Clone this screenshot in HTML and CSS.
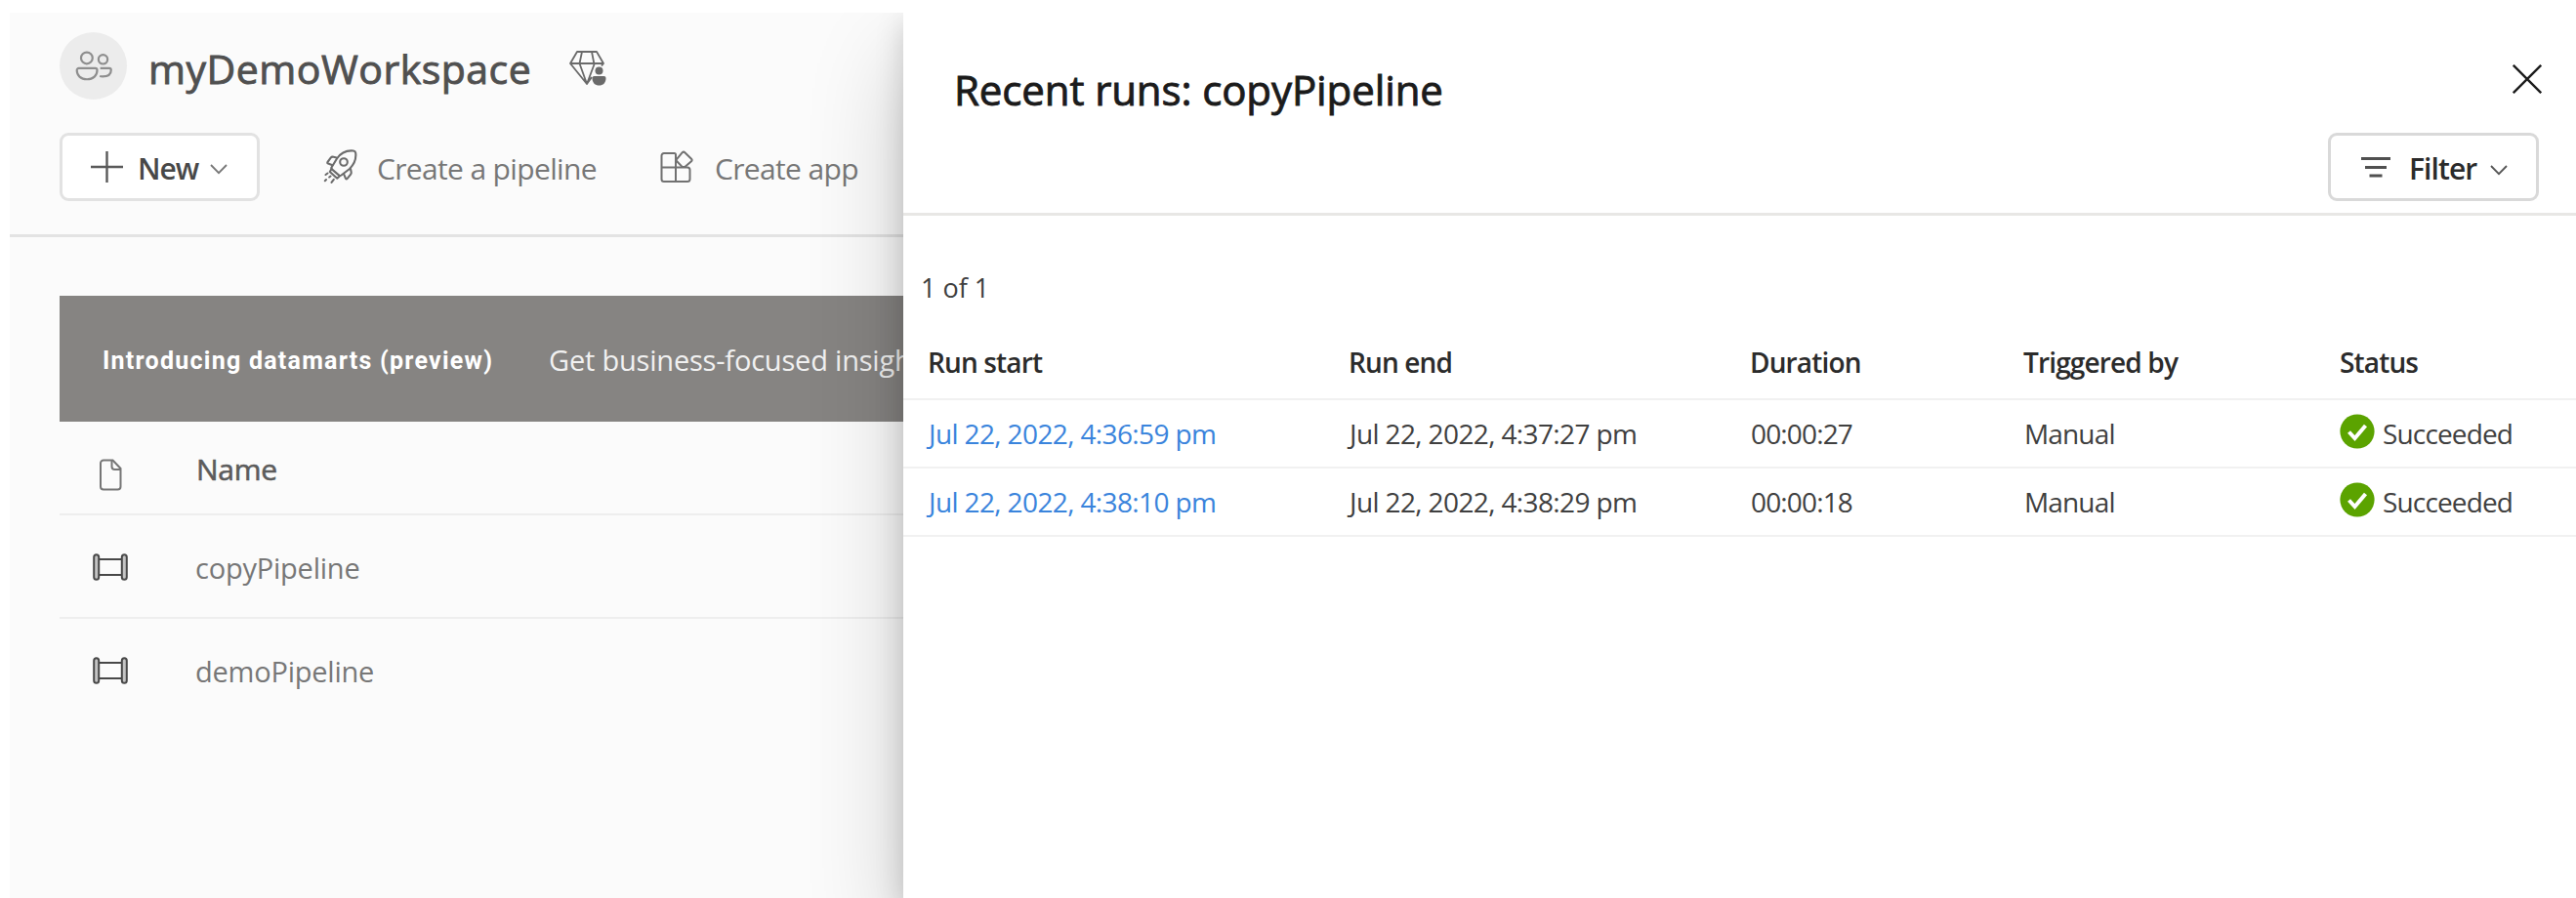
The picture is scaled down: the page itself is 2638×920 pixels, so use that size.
FILE: index.html
```html
<!DOCTYPE html>
<html lang="en">
<head>
<meta charset="utf-8">
<title>myDemoWorkspace</title>
<link rel="stylesheet" href="styles.css">
</head>
<body>
<div class="shell">
  <main class="workspace">
    <header class="ws-header">
      <div class="ws-title-row">
        <span class="avatar">
          <svg width="38" height="31" viewBox="0 0 40 32" fill="none" stroke="#8e8e8e" stroke-width="2.300"><circle cx="12.5" cy="7.5" r="6.200"/><circle cx="30" cy="9" r="4.900"/><path d="M4 18.500h17.500a2.200 2.200 0 0 1 2.200 2.200c0 5.500-4.200 9.800-11 9.800S1.800 26.200 1.800 20.700A2.200 2.200 0 0 1 4 18.500z"/><path d="M27 18.500h9.700a2 2 0 0 1 2 2c0 4.300-3.300 7-9.200 7-1 0-2-.1-3-.4"/></svg>
        </span>
        <h1 class="ws-title">myDemoWorkspace</h1>
        <svg class="diamond" width="38" height="38" viewBox="0 0 38 38" fill="none" stroke="#6a6a6a" stroke-width="1.800" stroke-linejoin="round"><path d="M8 2h20l7 12H1zM1 14l17 21 5-7M13 2l-2.500 12L18 35l7.500-20L23 2M35 14l-2 2.500"/><circle cx="30.500" cy="21.500" r="4" fill="#6a6a6a" stroke="none"/><path d="M25.500 27h10a2 2 0 0 1 2 2c0 5-3 7.500-7 7.500s-7-2.500-7-7.500a2 2 0 0 1 2-2z" fill="#6a6a6a" stroke="none"/></svg>
      </div>
      <div class="toolbar">
        <button class="btn btn-new">
          <svg width="33" height="34" viewBox="0 0 33 34" stroke="#5a5a5a" stroke-width="2.400" fill="none"><path d="M16.500 1v32M0 17h33"/></svg>
          <span class="new-label">New</span>
          <svg class="chev-new" width="18" height="11" viewBox="0 0 18 11" fill="none" stroke="#777" stroke-width="1.800"><path d="M1 1l8 8.200L17 1"/></svg>
        </button>
        <div class="tool tool-pipeline">
          <svg width="36" height="36" viewBox="0 0 36 36" fill="none" stroke="#6c6c6c" stroke-width="2.100" stroke-linejoin="round" stroke-linecap="round"><path d="M8.500 18.500L14 9.500C18 3.500 24 .8 31 1.500c1.500.2 2 .7 2.200 2.200C34 10 31.500 15.500 27 20l-8.500 6.500c-1 .7-1.800.6-2.600-.1l-7-6c-.6-.6-.7-1.200-.4-1.900z"/><circle cx="21" cy="13" r="3.800"/><path d="M13.500 8.500l-3-.8c-1.200-.3-2 0-2.800 1L4.500 13c-.5.8-.3 1.300.5 1.600l4.500 1.600M28 20l.7 3.200c.2 1 0 1.700-.6 2.500l-3.400 4.200c-.7.800-1.400.7-1.800-.3l-1.900-4.400M8.500 20l-1.700 3 7.500 6.700 2.700-2.400"/><path d="M4.500 24.500l-2 1.500M7.500 27.500l-1.300 1M3 31l-1.200 1.200M10.800 30.800l-2.300 3"/></svg>
          <span class="tool-label">Create a pipeline</span>
        </div>
        <div class="tool tool-app">
          <svg width="34" height="34" viewBox="0 0 34 34" fill="none" stroke="#717171" stroke-width="2" stroke-linejoin="round"><path d="M4 3h10.500a1.500 1.500 0 0 1 1.500 1.500V32H4a2.500 2.500 0 0 1-2.500-2.500v-24A2.500 2.500 0 0 1 4 3zM1.500 17.500H28a2.500 2.500 0 0 1 2.500 2.500v9.500A2.500 2.500 0 0 1 28 32H16"/><path d="M22.800 2.200a1.800 1.800 0 0 1 2.500 0l6.700 6.600a1.800 1.800 0 0 1 0 2.500l-6.700 5.800h-2.500l-5.600-5.800a1.800 1.800 0 0 1 0-2.500z"/></svg>
          <span class="tool-label">Create app</span>
        </div>
      </div>
    </header>
    <section class="content">
      <div class="banner">
        <strong class="banner-title">Introducing datamarts (preview)</strong>
        <span class="banner-text">Get business-focused insigh</span>
      </div>
      <div class="row row-head">
        <span class="cell-icon file-icon"><svg width="23" height="33" viewBox="0 0 23 33" fill="none" stroke="#767676" stroke-width="2"><path d="M4 1.500h9.500L21.500 10v18.500a3 3 0 0 1-3 3H4a3 3 0 0 1-3-3v-24a3 3 0 0 1 3-3z"/><path d="M12.500 1.500V8a3 3 0 0 0 3 3h6"/></svg></span>
        <span class="name-head">Name</span>
      </div>
      <div class="row">
        <span class="cell-icon"><svg width="36" height="28" viewBox="0 0 36 28" fill="#fbfbfb" stroke="#484848" stroke-width="2"><path d="M6 6h24M6 22h24"/><rect x="1.200" y="1.200" width="5" height="25.600" rx="2.500" fill="#c4c4c4"/><rect x="29.800" y="1.200" width="5" height="25.600" rx="2.500" fill="#c4c4c4"/></svg></span>
        <span class="item">copyPipeline</span>
      </div>
      <div class="row row-last">
        <span class="cell-icon"><svg width="36" height="28" viewBox="0 0 36 28" fill="#fbfbfb" stroke="#484848" stroke-width="2"><path d="M6 6h24M6 22h24"/><rect x="1.200" y="1.200" width="5" height="25.600" rx="2.500" fill="#c4c4c4"/><rect x="29.800" y="1.200" width="5" height="25.600" rx="2.500" fill="#c4c4c4"/></svg></span>
        <span class="item">demoPipeline</span>
      </div>
    </section>
  </main>
  <aside class="panel">
    <header class="panel-header">
      <h2 class="panel-title">Recent runs: copyPipeline</h2>
      <div class="panel-actions">
        <svg class="close" width="30" height="30" viewBox="0 0 30 30" fill="none" stroke="#1c1c1c" stroke-width="2.400"><path d="M.8.8l28.400 28.400M29.200.8L.8 29.200"/></svg>
        <button class="btn btn-filter">
          <svg width="30" height="22" viewBox="0 0 30 22" stroke="#505050" stroke-width="3" fill="none"><path d="M0 2.500h30M4 11.500h22M8.500 20h13"/></svg>
          <span class="filter-label">Filter</span>
          <svg class="chev-filter" width="18" height="11" viewBox="0 0 18 11" fill="none" stroke="#555" stroke-width="1.800"><path d="M1 1l8 8.200L17 1"/></svg>
        </button>
      </div>
    </header>
    <div class="count">1 of 1</div>
    <div class="runs">
      <div class="run run-head"><span>Run start</span><span>Run end</span><span>Duration</span><span>Triggered by</span><span>Status</span></div>
      <div class="run"><a class="date link">Jul 22, 2022, 4:36:59 pm</a><span class="date">Jul 22, 2022, 4:37:27 pm</span><span>00:00:27</span><span>Manual</span><span class="status"><svg width="36" height="36" viewBox="0 0 36 36"><circle cx="18" cy="18" r="17.600" fill="#5ba300"/><path d="M9.500 18.500l6 6.500L26.500 12" fill="none" stroke="#fff" stroke-width="4"/></svg><span>Succeeded</span></span></div>
      <div class="run"><a class="date link">Jul 22, 2022, 4:38:10 pm</a><span class="date">Jul 22, 2022, 4:38:29 pm</span><span>00:00:18</span><span>Manual</span><span class="status"><svg width="36" height="36" viewBox="0 0 36 36"><circle cx="18" cy="18" r="17.600" fill="#5ba300"/><path d="M9.500 18.500l6 6.500L26.500 12" fill="none" stroke="#fff" stroke-width="4"/></svg><span>Succeeded</span></span></div>
    </div>
  </aside>
</div>
</body>
</html>
```
FILE: styles.css
```css
* { box-sizing: border-box; }
body { margin: 0; background: #fff; font-family: "Open Sans", "Noto Sans", sans-serif; }
h1, h2 { margin: 0; font-weight: 400; white-space: nowrap; }
svg { display: block; flex: none; }
span { white-space: nowrap; }
.shell { display: grid; grid-template-columns: 915px 1713px; margin: 13px 0 0 10px; height: 907px; overflow: hidden; }
.workspace { background: #fbfbfb; min-width: 0; }
.ws-header { height: 230px; padding: 20px 0 0 51px; border-bottom: 3px solid #e3e3e3; }
.ws-title-row { display: flex; align-items: center; height: 69px; }
.avatar { display: flex; align-items: center; justify-content: center; width: 69px; height: 69px; border-radius: 50%; background: #ececec; }
.ws-title { margin-left: 22px; padding-top: 4px; width: 406px; font-size: 41px; line-height: 56px; letter-spacing: .5px; color: #505050; -webkit-text-stroke: .9px #505050; }
.diamond { margin-left: 25px; margin-top: 4px; }
.toolbar { display: flex; align-items: center; height: 70px; margin-top: 34px; font-size: 30px; letter-spacing: -.65px; color: #777; }
.btn { display: flex; align-items: center; height: 70px; border: 3px solid #e2e2e2; border-radius: 9px; background: #fff; font: inherit; padding: 0; }
.btn-new { width: 205px; padding-left: 29px; color: #484848; font-weight: 600; letter-spacing: -1px; }
.new-label { width: 74px; margin-left: 15px; text-align: left; padding-top: 2px; }
.chev-new { margin-top: 4px; }
.tool { display: flex; align-items: center; }
.tool-label { padding-top: 2px; }
.tool-pipeline { margin-left: 65px; gap: 19px; width: 345px; }
.tool-app { gap: 22px; }
.content { padding: 60px 0 0 51px; }
.banner { display: flex; align-items: center; height: 129px; padding-left: 44px; background: #868482; color: #fff; white-space: nowrap; }
.banner-title { width: 457px; flex: none; padding-top: 3px; font-family: Roboto, sans-serif; font-size: 25px; letter-spacing: 1.25px; }
.banner-text { font-size: 29px; padding-top: 1px; letter-spacing: -.2px; color: #f1f1f1; }
.row { display: flex; align-items: center; height: 106px; padding-left: 34px; border-bottom: 2px solid #eee; font-size: 29px; letter-spacing: -.22px; color: #777; }
.row-head { height: 96px; }
.row-last { border-bottom-color: transparent; }
.cell-icon { width: 105px; padding-top: 2px; }
.file-icon { padding: 14px 0 0 7px; }
.item { padding-top: 2px; }
.name-head { padding: 2px 0 0 1px; font-size: 30px; color: #5c5c5c; -webkit-text-stroke: .6px #5c5c5c; }
.panel { position: relative; background: #fff; box-shadow: 0 45px 92px rgba(0, 0, 0, .2), 0 10px 28px rgba(0, 0, 0, .16); }
.panel-header { display: flex; justify-content: space-between; height: 208px; padding: 0 38px 0 52px; border-bottom: 3px solid #e8e7e5; }
.panel-title { padding-top: 51px; font-size: 42px; line-height: 56px; letter-spacing: -.1px; color: #1b1b1b; -webkit-text-stroke: .9px #1b1b1b; }
.panel-actions { display: flex; flex-direction: column; align-items: flex-end; gap: 40px; padding-top: 53px; }
.close { margin-right: -3px; }
.btn-filter { width: 216px; padding-left: 31px; border-color: #d9d9d9; font-size: 30px; font-weight: 600; letter-spacing: -.9px; color: #2b2b2b; }
.filter-label { width: 83px; margin-left: 19px; padding-top: 2px; text-align: left; }
.chev-filter { margin-top: 7px; }
.count { margin: 56px 0 0 18px; font-size: 27px; line-height: 36px; color: #404040; }
.runs { margin-top: 19px; font-size: 28px; letter-spacing: -.85px; color: #404040; }
.run { display: grid; grid-template-columns: 431px 411px 280px 324px 1fr; align-items: center; height: 70px; padding-left: 26px; border-bottom: 2px solid #f1f1f1; }
.run-head { height: 78px; padding: 2px 0 0 25px; font-weight: 600; letter-spacing: -.85px; color: #2b2b2b; }
.date { letter-spacing: -.62px; }
.link { color: #3a84dc; }
.status { display: flex; align-items: center; gap: 8px; margin-left: -1px; }
.status svg { margin-top: -4px; }
```
